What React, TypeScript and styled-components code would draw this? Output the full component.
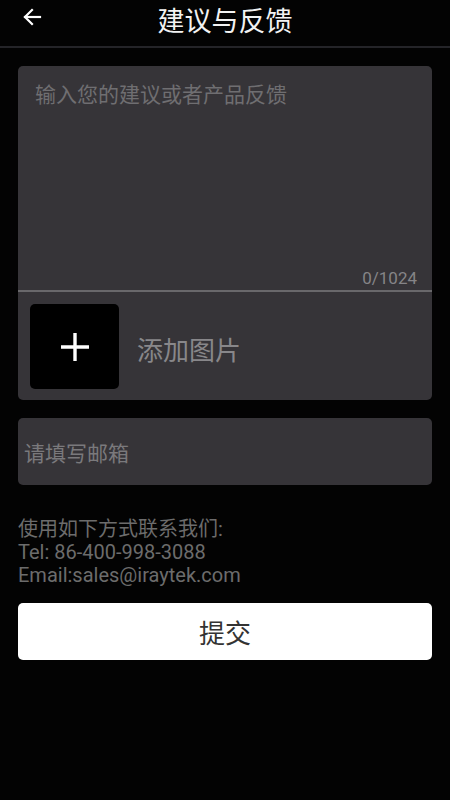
import styled, { createGlobalStyle } from "styled-components"

const GlobalStyle = createGlobalStyle`
    html, body {
        margin: 0;
        padding: 0;
        background: #030303;
    }

    body {
        font-family: "Roboto", "Noto Sans CJK SC", sans-serif;
    }
`

const Page = styled.div`
    width: 450px;
    min-height: 800px;
    background: #030303;
`

const Header = styled.header`
    height: 46px;
    border-bottom: 2px solid #242428;
    display: flex;
    align-items: flex-start;
    justify-content: center;
    position: relative;

    .header__back {
        position: absolute;
        left: 22px;
        top: 7px;
        width: 20px;
        height: 20px;
    }

    .header__title {
        margin: 0;
        font-size: 27px;
        line-height: 39px;
        font-weight: 400;
        color: #f2f2f2;
        font-family: "Noto Sans CJK SC", sans-serif;
    }
`

const Content = styled.main`
    padding: 18px 18px 0;
    display: flex;
    flex-direction: column;
`

const Card = styled.div`
    background: #363438;
    border-radius: 5px;
    overflow: hidden;
`

const TextArea = styled.div`
    height: 226px;
    border-bottom: 2px solid #69686b;
    display: flex;
    flex-direction: column;
    justify-content: space-between;
    padding: 12px 15px 2px 17px;
    box-sizing: border-box;

    .textarea__placeholder {
        font-family: "Noto Sans CJK SC", sans-serif;
        font-size: 21px;
        color: #6f6e71;
    }

    .textarea__counter {
        align-self: flex-end;
        font-size: 17px;
        color: #858487;
    }
`

const ImageRow = styled.div`
    display: flex;
    align-items: center;
    gap: 18px;
    padding: 12px 12px 11px;

    .image__label {
        font-family: "Noto Sans CJK SC", sans-serif;
        font-size: 26px;
        color: #88878a;
        margin-top: 3px;
    }
`

const AddButton = styled.div`
    width: 89px;
    height: 85px;
    background: #000;
    border-radius: 5px;
    display: flex;
    align-items: center;
    justify-content: center;
`

const EmailInput = styled.div`
    margin-top: 18px;
    height: 67px;
    background: #363438;
    border-radius: 5px;
    display: flex;
    align-items: center;
    padding-left: 6px;
    font-family: "Noto Sans CJK SC", sans-serif;
    font-size: 21px;
    color: #7a797c;
`

const Contact = styled.div`
    margin-top: 33px;
    font-size: 20px;
    line-height: 23px;
    color: #6c6c6c;

    .contact__line {
        display: block;
    }
`

const SubmitButton = styled.button`
    margin-top: 16px;
    height: 57px;
    border: none;
    border-radius: 5px;
    background: #fff;
    font-family: "Noto Sans CJK SC", sans-serif;
    font-size: 26px;
    color: #333;
    padding: 0;
`

const App = () => {
    return (
        <Page>
            <GlobalStyle />
            <Header>
                <svg className="header__back" viewBox="0 0 20 20" fill="none" stroke="#fff" strokeWidth="2.2" strokeLinecap="square">
                    <path d="M3 10h15" />
                    <path d="M10 3l-7 7 7 7" />
                </svg>
                <h1 className="header__title">建议与反馈</h1>
            </Header>

            <Content>
                <Card>
                    <TextArea>
                        <span className="textarea__placeholder">输入您的建议或者产品反馈</span>
                        <span className="textarea__counter">0/1024</span>
                    </TextArea>
                    <ImageRow>
                        <AddButton>
                            <svg width="30" height="30" viewBox="0 0 30 30" stroke="#fff" strokeWidth="3.4">
                                <path d="M15 1v28" />
                                <path d="M1 15h28" />
                            </svg>
                        </AddButton>
                        <span className="image__label">添加图片</span>
                    </ImageRow>
                </Card>

                <EmailInput>请填写邮箱</EmailInput>

                <Contact>
                    <span className="contact__line">使用如下方式联系我们:</span>
                    <span className="contact__line">Tel: 86-400-998-3088</span>
                    <span className="contact__line">Email:sales@iraytek.com</span>
                </Contact>

                <SubmitButton>提交</SubmitButton>
            </Content>
        </Page>
    )
}

export default App
